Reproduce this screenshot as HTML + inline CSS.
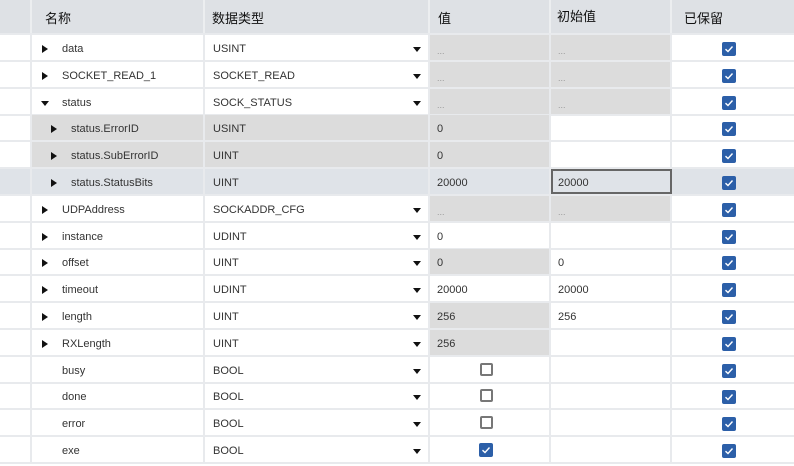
<!DOCTYPE html>
<html><head><meta charset="utf-8"><style>
*{margin:0;padding:0;box-sizing:border-box}
body{width:794px;height:464px;background:#fff;font-family:"Liberation Sans","Noto Sans CJK SC",sans-serif;font-size:11px;color:#333;position:relative;overflow:hidden}
.r{position:absolute;left:0;width:794px;height:27px;border-bottom:2px solid #e8eaed}
.c{position:absolute;top:0;height:25px;line-height:29px;border-right:2px solid #e8eaed;white-space:nowrap}
.c0{left:0;width:32px}.c1{left:32px;width:173px}.c2{left:205px;width:225px}.c3{left:430px;width:121px}.c4{left:551px;width:121px}.c5{left:672px;width:122px;border-right:none}
.g{background:#dcdcdc}
.sel{background:#dfe3e8}
.t{position:absolute;top:10px;width:0;height:0;border-top:4px solid transparent;border-bottom:4px solid transparent;border-left:6px solid #111}
.d{position:absolute;top:12px;width:0;height:0;border-left:4px solid transparent;border-right:4px solid transparent;border-top:5px solid #111}
.ell{color:#999;font-size:9px;line-height:33px}
.cb{position:absolute;top:7px;width:14px;height:14px;border-radius:2px;background:#2c5fa8}
.cb svg{position:absolute;left:2px;top:2px}
.ub{position:absolute;top:6px;width:13px;height:13px;border:2px solid #777;border-radius:2px;background:#fff}
.hd{position:absolute;top:0;left:0;width:794px;height:35px;background:#dee1e5;border-bottom:2px solid #e8eaed}
.hd div{position:absolute;top:0;height:33px;line-height:38px;border-right:2px solid #eceef0;font-size:13px;color:#111}
</style></head><body>
<div class="hd">
<div style="left:0;width:32px"></div>
<div style="left:32px;width:173px;padding-left:13px">名称</div>
<div style="left:205px;width:225px;padding-left:7px">数据类型</div>
<div style="left:430px;width:121px;padding-left:8px">值</div>
<div style="left:551px;width:121px;padding-left:6px;line-height:34px">初始值</div>
<div style="left:672px;width:122px;padding-left:12px;border:none">已保留</div>
</div>
<script>
const rows=[
["data","USINT",1,0,"...","...",1,1,"",0],
["SOCKET_READ_1","SOCKET_READ",1,0,"...","...",1,1,"",0],
["status","SOCK_STATUS",2,0,"...","...",1,1,"",0],
["status.ErrorID","USINT",1,1,"0","",1,0,"child",0],
["status.SubErrorID","UINT",1,1,"0","",1,0,"child",0],
["status.StatusBits","UINT",1,1,"20000","20000",0,0,"sel",0],
["UDPAddress","SOCKADDR_CFG",1,0,"...","...",1,1,"",0],
["instance","UDINT",1,0,"0","",0,0,"",0],
["offset","UINT",1,0,"0","0",1,0,"",0],
["timeout","UDINT",1,0,"20000","20000",0,0,"",0],
["length","UINT",1,0,"256","256",1,0,"",0],
["RXLength","UINT",1,0,"256","",1,0,"",0],
["busy","BOOL",0,0,"","",0,0,"",1],
["done","BOOL",0,0,"","",0,0,"",1],
["error","BOOL",0,0,"","",0,0,"",1],
["exe","BOOL",0,0,"","",0,0,"",2]];
const chk='<svg width="10" height="10" viewBox="0 0 10 10"><path d="M1.5 5.2 L4 7.5 L8.5 2.5" stroke="#fff" stroke-width="1.4" fill="none"/></svg>';
let h='';
rows.forEach((r,i)=>{
 const [n,t,tri,child,v,iv,vg,ig,kind,bool]=r;
 const top=35+i*26.8;
 const sel=kind=="sel", ch=kind=="child";
 h+=`<div class="r${sel?' sel':''}" style="top:${top}px">`;
 h+=`<div class="c c0"></div>`;
 const ind=child?9:0;
 const nbg=ch?' g':'';
 h+=`<div class="c c1${nbg}">`;
 if(tri==1)h+=`<div class="t" style="left:${10+ind}px"></div>`;
 if(tri==2)h+=`<div class="d" style="left:${9+ind}px;top:12px"></div>`;
 h+=`<span style="position:absolute;left:${30+ind}px">${n}</span></div>`;
 h+=`<div class="c c2${nbg}"><span style="position:absolute;left:8px">${t}</span>${(ch||sel)?'':'<div class="d" style="left:208px"></div>'}</div>`;
 const vcls=(vg||ch)?' g':'';
 let vc=v=="..."?'<span class="ell" style="position:absolute;left:7px">...</span>':`<span style="position:absolute;left:7px">${v}</span>`;
 if(bool==1)vc='<div class="ub" style="left:50px"></div>';
 if(bool==2)vc=`<div class="cb" style="left:49px;top:6px">${chk}</div>`;
 h+=`<div class="c c3${vcls}">${vc}</div>`;
 let ic=iv=="..."?'<span class="ell" style="position:absolute;left:7px">...</span>':`<span style="position:absolute;left:7px">${iv}</span>`;
 const iborder=sel?'border:2px solid #666;height:25px;line-height:25px;':'';
 h+=`<div class="c c4${ig?' g':''}" style="${iborder}">${sel?`<span style="position:absolute;left:5px">${iv}</span>`:ic}</div>`;
 h+=`<div class="c c5"><div class="cb" style="left:50px">${chk}</div></div>`;
 h+='</div>';
});
document.write(h);
</script>
</body></html>
